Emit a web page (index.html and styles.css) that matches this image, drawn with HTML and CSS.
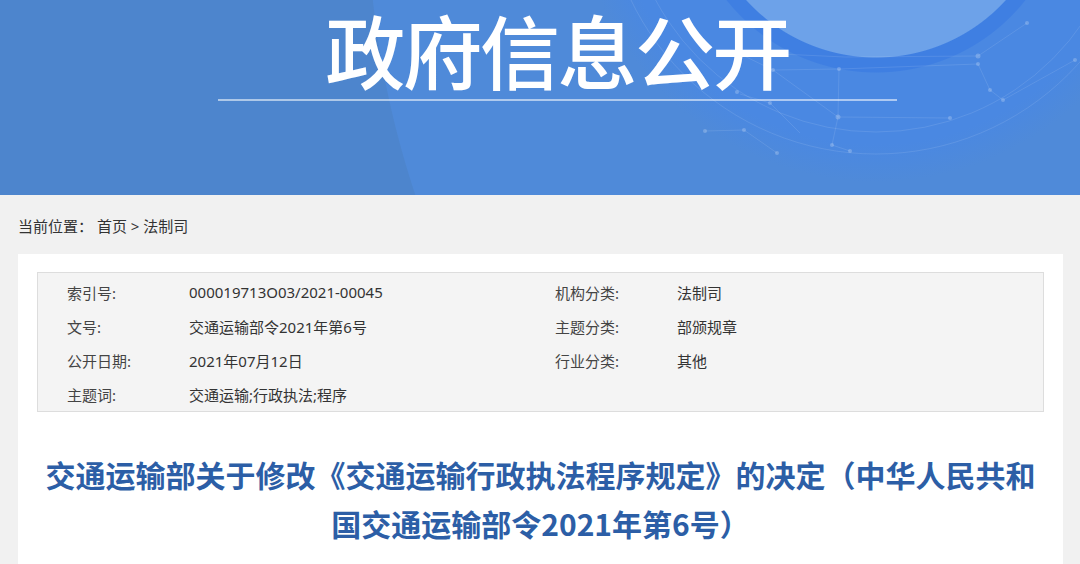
FILE: index.html
```html
<!DOCTYPE html>
<html lang="zh-CN">
<head>
    <meta charset="UTF-8">
    <meta name="viewport" content="width=device-width, initial-scale=1.0">
    <title>政府信息公开</title>
    <link rel="stylesheet" href="styles.css">
</head>
<body>
    <div class="banner">
        <svg class="net" width="1080" height="195" viewBox="0 0 1080 195">
            <g stroke="rgba(255,255,255,0.10)" fill="none">
                <circle cx="876" cy="-118" r="272"/>
                <circle cx="876" cy="-118" r="250"/>
                <path d="M736 52 L845 57 L978 56 L1027 23 M736 52 L773 70 L838 117 L950 118 M773 70 L839 69 L978 64 M839 69 L838 117 M978 64 L990 90 L1003 100 M838 117 L832 145 L850 151 M705 131 L744 130 L777 153 M740 94 L770 103 L800 133 M1003 100 L1075 60"/>
            </g>
            <g fill="rgba(255,255,255,0.22)">
                <circle cx="736" cy="52" r="2"/>
                <circle cx="773" cy="70" r="2"/>
                <circle cx="839" cy="69" r="2"/>
                <circle cx="838" cy="117" r="2.5"/>
                <circle cx="978" cy="56" r="2.5"/>
                <circle cx="978" cy="64" r="2"/>
                <circle cx="990" cy="90" r="2"/>
                <circle cx="1003" cy="100" r="2"/>
                <circle cx="1027" cy="23" r="2"/>
                <circle cx="1075" cy="60" r="2"/>
                <circle cx="950" cy="118" r="2"/>
                <circle cx="744" cy="130" r="2"/>
                <circle cx="770" cy="103" r="2"/>
                <circle cx="705" cy="131" r="2"/>
                <circle cx="832" cy="145" r="2"/>
                <circle cx="850" cy="151" r="2"/>
                <circle cx="777" cy="153" r="2"/>
                <circle cx="737" cy="92" r="2"/>
            </g>
        </svg>
        <div class="banner-inner">
            <div class="banner-title">政府信息公开</div>
        </div>
    </div>

    <div class="crumb">当前位置： 首页 &gt; 法制司</div>

    <div class="card">
        <div class="meta">
            <span class="meta-label">索引号:</span>
            <span class="meta-value">000019713O03/2021-00045</span>
            <span class="meta-label">机构分类:</span>
            <span class="meta-value">法制司</span>

            <span class="meta-label">文号:</span>
            <span class="meta-value">交通运输部令2021年第6号</span>
            <span class="meta-label">主题分类:</span>
            <span class="meta-value">部颁规章</span>

            <span class="meta-label">公开日期:</span>
            <span class="meta-value">2021年07月12日</span>
            <span class="meta-label">行业分类:</span>
            <span class="meta-value">其他</span>

            <span class="meta-label">主题词:</span>
            <span class="meta-value">交通运输;行政执法;程序</span>
            <span class="meta-label"></span>
            <span class="meta-value"></span>
        </div>

        <h1 class="doc-title">交通运输部关于修改《交通运输行政执法程序规定》的决定（中华人民共和国交通运输部令2021年第6号）</h1>
    </div>
</body>
</html>
```

FILE: styles.css
```css
html, body {
    margin: 0;
    padding: 0;
}
body {
    font-family: "Noto Sans", "Noto Sans CJK SC", sans-serif;
    background-color: #f1f1f1;
    color: #333;
    overflow: hidden;
}
.banner {
    position: relative;
    height: 195px;
    overflow: hidden;
    background:
        radial-gradient(circle at 876px -118px, #6da2e9 0 175px, #3f7fe2 176px 190px, #4a88e2 191px 262px, rgba(80,137,220,0) 300px),
        radial-gradient(circle at 1300px -100px, #4f8ad9 0 932px, #4d85cd 933px);
}
.net {
    position: absolute;
    top: 0;
    left: 0;
}
.banner-inner {
    position: relative;
    width: 679px;
    margin-left: 218px;
    border-bottom: 2px solid rgba(255,255,255,0.55);
    height: 101px;
    box-sizing: border-box;
    text-align: center;
}
.banner-title {
    font-family: "Noto Sans CJK SC", sans-serif;
    font-size: 80px;
    font-weight: 500;
    line-height: 97px;
    letter-spacing: -2.6px;
    color: #fff;
}
.crumb {
    margin: 21px 0 18px;
    padding: 0 18px;
    font-size: 15px;
    line-height: 20px;
    color: #333;
}
.card {
    background: #fff;
    margin: 0 17px 0 18px;
    padding: 18px 19px 40px;
}
.meta {
    display: grid;
    grid-template-columns: 122px 366px 122px 1fr;
    grid-auto-rows: 34px;
    align-items: center;
    padding: 2px 0 0 29px;
    background: #f4f4f4;
    border: 1px solid #dddddd;
    font-size: 15px;
}
.meta-label {
    color: #444;
}
.meta-value {
    color: #333;
}
.doc-title {
    margin: 38px 0 0;
    text-align: center;
    font-family: "Noto Sans CJK SC", sans-serif;
    font-size: 30px;
    font-weight: 700;
    line-height: 49px;
    color: #2c5ea6;
}
```
